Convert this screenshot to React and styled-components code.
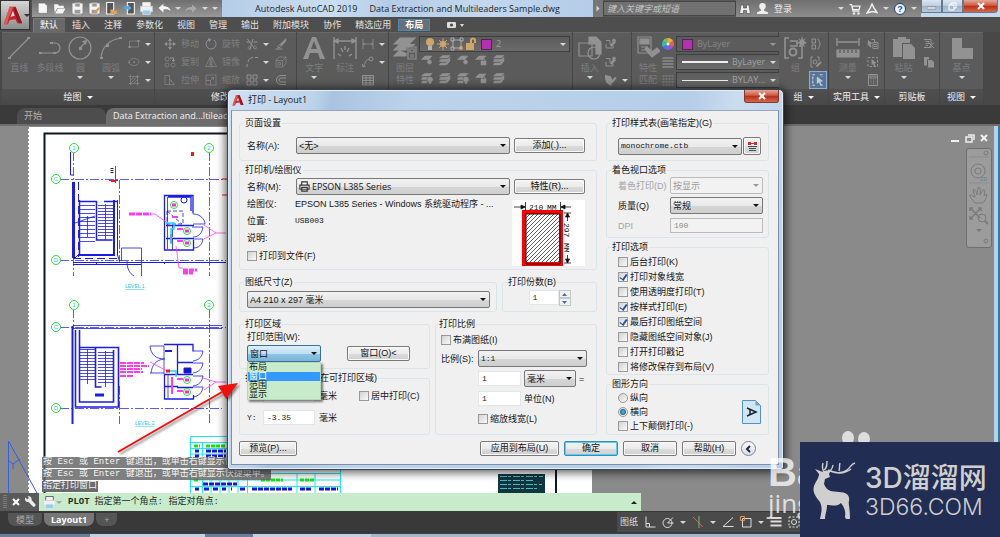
import React, { useState } from 'react'
import styled, { createGlobalStyle, css } from 'styled-components';

const GlobalStyle = createGlobalStyle`
* { box-sizing: border-box; }
html, body { margin: 0; height: 100%; overflow: hidden; }
#root { height: 100%; }
body, button, input, select {
    font-family: "Liberation Sans", "Noto Sans CJK SC", sans-serif;
    font-size: 9px;
    line-height: 12px;
}
button, input, select { margin: 0; padding: 0; border: 0; background: none; color: inherit; }
ul { margin: 0; padding: 0; list-style: none; }
p, dl, dd, h1, h2 { margin: 0; font-size: inherit; font-weight: inherit; }
svg { display: block; flex: none; }
`;

/* ---------- icons ---------- */

const shapes = {
    line: <><path d="M3 21L21 3" /><path d="M1 21h3v2H1zM20 1h3v2h-3z" fill="currentColor" stroke="none" /></>,
    polyline: <><path d="M2 17h15a5 5 0 0 0 0-10h-3" /><path d="M1 16h3v2H1zM12 6h3v2h-3zM15 16h3v2h-3z" fill="currentColor" stroke="none" /></>,
    circle: <><circle cx="12" cy="12" r="11" /><path d="M12 12l6-6" /><path d="M14 5l5-1-1 5zM11 11h3v3h-3z" fill="currentColor" stroke="none" /></>,
    arc: <><path d="M2 22C3 11 10 4 22 2" /><path d="M1 21h3v2H1zM7 8h3v3H7zM20 1h3v2h-3z" fill="currentColor" stroke="none" /></>,
    rect: <><path d="M3 6h18v12H3z" /><path d="M1 16h4v4H1zM19 4h4v4h-4z" fill="currentColor" stroke="none" /></>,
    ellipse: <><ellipse cx="12" cy="12" rx="10" ry="7" /><path d="M11 11h3v3h-3zM1 11h3v3H1z" fill="currentColor" stroke="none" /></>,
    hatch: <><path d="M5 1v22M19 1v22M1 5h22M1 19h22M5 13l8-8M5 19L19 5M11 19l8-8" /></>,
    move: <><path d="M12 3v18M3 12h18" strokeWidth="2" /><path d="M12 0l4 6H8zM12 24l4-6H8zM0 12l6-4v8zM24 12l-6-4v8z" fill="currentColor" stroke="none" /></>,
    rotate: <><path d="M18 4a10 10 0 1 1-10-1" strokeWidth="2" /><path d="M6 0l7 3-5 5z" fill="currentColor" stroke="none" /></>,
    trim: <><path d="M3 2l14 19M14 2L8 22M1 8h8M15 8h8" strokeWidth="2" /><circle cx="7" cy="20" r="3" /><circle cx="18" cy="19" r="3" /></>,
    erase: <><path d="M22 1L10 13l3 3L22 6z" fill="currentColor" /><path d="M10 13l-5 5 3 2 5-4M1 22h14" strokeWidth="2" /></>,
    copy: <><circle cx="6" cy="6" r="4" /><circle cx="6" cy="18" r="4" /><circle cx="18" cy="18" r="4" /><path d="M12 4h7v6M16 8l3 3 3-3" strokeWidth="2" /></>,
    mirror: <><path d="M10 3v18H1zM14 3v18h9z" /><path d="M12 0v24" /></>,
    fillet: <><path d="M2 22v-6M4 12C5 6 9 3 14 3M18 3h6" strokeWidth="2" /></>,
    explode: <><path d="M2 9h13v13H2zM2 9l6-7h14v13l-7 7M15 9l7-7M6 13h5v5H6z" /></>,
    stretch: <><path d="M2 3h9v18H2zM11 10l10 11H11" /><path d="M15 12v4" /></>,
    scale: <><path d="M2 2h20v20H2zM2 13h9v9" /><path d="M11 13l6-6M12 7h5v5" /></>,
    array: <><path d="M2 2h8v8H2zM14 2h8v8h-8zM2 14h8v8H2zM14 14h8v8h-8z" strokeWidth="2" /></>,
    offset: <><path d="M22 3H12a9 9 0 0 0 0 18h10M22 8H12a4 4 0 0 0 0 8h10" strokeWidth="2" /></>,
    text: <path d="M1 23L10 1h4l9 22h-5l-2-6H8l-2 6zM9 13h6l-3-8z" fill="currentColor" stroke="none" />,
    dimension: <><path d="M1 1v22M23 1v22M1 5h22M8 20l-3-2M10 16l-2-4M14 16l2-4M16 20l3-2M12 14v-4" strokeWidth="1.4" /><path d="M1 5l4-2v4zM23 5l-4-2v4z" fill="currentColor" /></>,
    linear: <><path d="M2 2v20M22 2v20M2 12h20M5 10l-3 2 3 2M19 10l3 2-3 2" strokeWidth="1.6" /></>,
    leader: <><circle cx="18" cy="6" r="4" strokeWidth="2" /><path d="M14 7C6 7 7 16 2 22M1 16l1 6 5-2" strokeWidth="2" /></>,
    table: <><path d="M1 3h22v19H1zM1 8h22M1 13h22M1 18h22M8 3v19M16 3v19" strokeWidth="2" /></>,
    layers: <><path d="M7 2h15l-6 6H1zM7 8l-6 6h12v-3h5l4-3M7 14l-6 6h12v-3" fill="currentColor" /><path d="M15 11h8v12h-8z" fill="#5b5b5b" /><path d="M17 13h4v3h-4zM17 19h4M17 21h4" /></>,
    layerOne: <><path d="M8 4h14l-6 7H1z" fill="currentColor" /><circle cx="17" cy="16" r="4" fill="currentColor" /></>,
    layerLock: <><path d="M8 4h14l-6 7H1z" fill="currentColor" /><path d="M12 14h10v8H12z" fill="currentColor" /><path d="M14 14v-2c0-3 6-3 6 0v2" strokeWidth="2" /></>,
    layerTwo: <><path d="M7 3h15l-5 5H1zM3 11h13l6-4v3l-5 5H1zM3 18h10l3-2v3l-2 3H1z" fill="currentColor" /><path d="M15 21l7-9" strokeWidth="3" /></>,
    layerBulb: <><path d="M7 3h15l-5 5H1zM3 11h9l-1 4H1zM3 18h9v4H1z" fill="currentColor" /><circle cx="18" cy="15" r="5" fill="currentColor" /><path d="M16 20h4v3h-4z" fill="currentColor" /></>,
    insert: <><path d="M1 7h13v13H1z" /><circle cx="16" cy="17" r="6" /><path d="M11 1h7l5 5v12h-5V8h-7z" fill="currentColor" /></>,
    block: <><path d="M2 5h8v8M2 12v8h14v-5" strokeWidth="2" /><path d="M10 14l8-8 3 3-8 8z" fill="currentColor" /><circle cx="18" cy="5" r="3" fill="currentColor" /></>,
    tag: <><path d="M1 4l9 2 3 6-2 9-7-5zM12 18l10-11" fill="currentColor" strokeWidth="4" /></>,
    match: <><path d="M2 1h13v16H2z" /><path d="M4 3h9v5H4zM5 11h7M5 14h7" fill="currentColor" /><path d="M11 11l5 5 5-4 3 3-8 6-7-8z" fill="currentColor" /></>,
    lines: <path d="M1 4h22M1 10h22M1 16h22M1 22h22" strokeWidth="3" />,
    dashes: <path d="M1 4h22M1 10h22M1 16h22M1 22h22" strokeWidth="2" strokeDasharray="4 2" />,
    group: <><path d="M6 2H2v20h4M16 10h3v12h-4M7 5h7v5H7" strokeWidth="1.6" /><circle cx="10" cy="16" r="3.5" strokeWidth="2" /><path d="M19 0l1 4 3-2-2 3 3 2-3 1 1 3-3-2-3 2 1-3-3-1 3-2-2-3 3 2z" fill="currentColor" stroke="none" /></>,
    ungroup: <><path d="M4 2h7v8H4zM4 14h7v8H4zM15 2c5 0 2 9 6 10-4 1-1 10-6 10" strokeWidth="2" /></>,
    editGroup: <><path d="M6 2H2v20h4M14 2h4v8" strokeWidth="2" /><circle cx="10" cy="12" r="4" strokeWidth="2" /><path d="M13 21l9-9" strokeWidth="4" /></>,
    pickGroup: <><path d="M7 3H3v18h4M15 3h4v4M17 21h3" strokeWidth="2" strokeDasharray="5 2" /><path d="M10 6l11 8-5 1 3 6-3 1-2-6-4 3z" fill="currentColor" stroke="none" /></>,
    measure: <><path d="M1 2v8M23 2v8M2 6h20" strokeWidth="1.4" /><path d="M1 14h22v7H1z" fill="currentColor" /><path d="M4 14v3M8 14v3M12 14v3M16 14v3M20 14v3" stroke="#555" /></>,
    pick: <><path d="M12 9h10v12H12zM14 13h6M14 17h6M9 3h6v6" strokeWidth="2" /><path d="M2 4l9 7-4 1 2 6-3 1-2-5-3 2z" fill="currentColor" stroke="none" /></>,
    pickAll: <><path d="M2 3h19v18H2z" strokeWidth="2" strokeDasharray="5 3" /><path d="M9 6l10 8-4 1 2 5-3 1-2-5-3 2z" fill="currentColor" stroke="none" /></>,
    calc: <><path d="M3 1h18v22H3zM6 4h12v4H6zM7 12h2M12 12h2M17 12h1M7 16h2M12 16h2M17 16h1M7 20h2M12 20h2M17 20h1" strokeWidth="2" /></>,
    paste: <path d="M1 3h5V1h8v2h4v4h-8v14H1zM11 8h8l4 4v11H11z" fill="currentColor" stroke="none" />,
    cut: <><path d="M2 3h14v16H2M5 7h8M5 11h8M5 15h5" strokeWidth="2" /><path d="M11 9l11 11M22 9L11 20" strokeWidth="2" /></>,
    copyClip: <path d="M2 2h10v5H8v12H2zM10 8h8l4 4v11H10z" fill="currentColor" stroke="none" />,
    base: <path d="M2 2h10v10h11v11H2z" fill="currentColor" stroke="none" />,
    newFile: <path d="M4 2h12l5 5v14H4z" fill="currentColor" stroke="#666" />,
    open: <path d="M2 4h7l2 3h9v4H8L3 20zM9 12h14l-5 9H4z" fill="currentColor" stroke="none" />,
    save: <><path d="M2 2h20v20H2z" fill="currentColor" stroke="#777" /><path d="M7 2h10v7H7zM6 14h12v8H6z" fill="#999" /></>,
    saveAs: <><path d="M2 2h20v20H2z" fill="currentColor" stroke="#777" /><path d="M7 2h10v7H7zM6 14h12v8H6z" fill="#999" /><path d="M12 20l9-9" stroke="#dc9b55" strokeWidth="4" /></>,
    mobile: <><path d="M3 1h13v21H3z" fill="#555" strokeWidth="2" /><path d="M10 14h5l1 2h6v6H10z" fill="#e0a356" stroke="none" /></>,
    mobileSave: <><path d="M8 1h13v21H8z" fill="#555" strokeWidth="2" /><path d="M1 8h8V4l7 7-7 6v-4H1z" fill="#53a6e2" stroke="none" /></>,
    print: <><path d="M5 1h14v8H5z" fill="#f5f5f5" /><path d="M1 8h22v10H1z" fill="#f0f0f0" stroke="#cdd2d6" /><path d="M5 15h14v8H5z" fill="#9acbea" stroke="#d9eefb" /></>,
    undo: <path d="M1 11l9-8v5c9 0 13 4 13 9-3-4-7-4-13-3v6z" fill="currentColor" stroke="none" />,
    redo: <path d="M23 11l-9-8v5C5 8 1 12 1 17c3-4 7-4 13-3v6z" fill="currentColor" stroke="none" />,
    search: <><path d="M4 4h5v6h6V4h5l3 17h-8v-6H9v6H1z" fill="currentColor" stroke="#444" /></>,
    user: <><circle cx="12" cy="8" r="6" fill="currentColor" stroke="none" /><path d="M9 12h6v4l7 3v3H2v-3l7-3z" fill="currentColor" stroke="none" /></>,
    cart: <><path d="M1 3h4l3 13h13M6 6h16l-2 7H8z" strokeWidth="2.5" /><circle cx="10" cy="21" r="2" fill="currentColor" /><circle cx="19" cy="21" r="2" fill="currentColor" /></>,
    a360: <path d="M12 2l4 8 6 9-9-2-11 3 6-9z" strokeWidth="3" />,
    wrench: <path d="M3 3l4 4 3-3-3-3c6-2 9 3 8 7l8 9c1 3-3 6-5 4l-9-9C4 13 0 8 3 3z" fill="currentColor" stroke="none" />,
    ortho: <path d="M4 1v21h19M4 15h7v7" strokeWidth="2" />,
    polar: <><circle cx="11" cy="14" r="9" strokeWidth="2" /><path d="M11 14L22 3M11 14h12" strokeWidth="2" /></>,
    iso: <><path d="M2 2l20 20" stroke="#d65c52" strokeWidth="2" /><path d="M14 0v24" stroke="#6ec06c" strokeWidth="2" /></>,
    osnapAngle: <path d="M22 3L2 21h21" strokeWidth="2" />,
    osnap: <><path d="M5 5h17v17H5z" strokeWidth="2" /><path d="M1 1h8v8H1z" stroke="#e5955a" strokeWidth="2" /></>,
    lineWeight: <path d="M1 4h22M1 11h22M1 19h22" strokeWidth="4" />,
    select: <><path d="M2 2h20v20H2z" strokeDasharray="4 3" strokeWidth="2" /><circle cx="12" cy="12" r="5" strokeWidth="2" /></>,
};

const Icon = ({ name, size = 12, className }) => (
    <svg className={className} width={size} height={size} viewBox="0 0 24 24" fill="none"
        stroke="currentColor" strokeWidth="1.2" aria-hidden="true">
        {shapes[name]}
    </svg>
);

const Caret = styled.i`
display: inline-block;
flex: none;
border: 3px solid transparent;
border-top-color: ${p => p.$color || '#d8d8d8'};
border-bottom-width: 0;
`;

const LogoA = ({ size }) => (
    <svg width={size} height={size} viewBox="0 0 24 24" aria-hidden="true">
        <path d="M8 2h7l8 20h-6l-2-5-7 1-2 5H1z" fill="#c3262e" />
        <path d="M8 2l4 1L7 15l-2 8H1z" fill="#e4585b" />
        <path d="M12 7l2 6-5 1z" fill="#f3dfdf" />
        <path d="M15 2l8 20h-4L12 5z" fill="#96181f" />
    </svg>
);

/* ---------- application header ---------- */

const Window = styled.div`
position: relative;
display: flex;
flex-direction: column;
height: 100vh;
min-height: 537px;
overflow: hidden;
background: #3b3b3b;
color: #e4e4e4;
`;

const Header = styled.header`
display: grid;
grid-template-columns: 30px 1fr;
grid-template-rows: 17px 15px;
column-gap: 2px;
background: #4e4e4e;
`;

const AppButton = styled.button`
grid-row: 1 / 3;
display: flex;
align-items: center;
gap: 1px;
height: 30px;
padding-left: 2px;
border: 1px solid #333;
background: linear-gradient(#d6d6d6, #8d8d8d);
`;

const TitleBar = styled.div`
display: flex;
min-width: 0;
`;

const QuickAccess = styled.div`
display: flex;
align-items: center;
justify-content: space-between;
width: 190px;
padding: 0 4px;
background: linear-gradient(#6f6f6f, #989898);
color: #f5f5f5;
button { color: inherit; }
button:disabled { color: #a9a9a9; }
`;

const Title = styled.h1`
flex: 1;
display: flex;
align-items: center;
justify-content: center;
gap: 12px;
min-width: 0;
background: linear-gradient(100deg, #b5cde7, #cadef1 30%, #b4cce6 45%, #c3d8ee 70%, #b3cce8);
color: #20242a;
font-family: "Open Sans", sans-serif;
font-size: 9px;
white-space: nowrap;
`;

const SearchBox = styled.div`
display: flex;
align-items: center;
width: 143px;
background: #5a5a5a;
button { width: 10px; height: 17px; background: #777; display: grid; place-items: center; }
i { transform: rotate(-90deg); }
input {
    flex: 1;
    min-width: 0;
    height: 15px;
    padding: 0 3px;
    border: 1px solid #454545;
    background: #717171;
}
input::placeholder { color: #c4c4c4; font-style: italic; opacity: 1; }
`;

const Account = styled.div`
display: flex;
align-items: center;
gap: 5px;
width: 185px;
padding: 0 4px 0 3px;
background: linear-gradient(#6f6f6f, #8d8d8d);
color: #eee;
.name { margin-right: auto; }
`;

const HelpButton = styled.button`
width: 12px;
height: 12px;
border-radius: 50%;
border: 1px solid #223e70;
background: #eef3fa;
color: #1c4e9c;
font-weight: bold;
line-height: 10px;
`;

const WindowButtons = styled.div`
display: flex;
justify-content: flex-end;
width: 79px;
padding-right: 2px;
background: #c4d8ed;
`;

const WinButton = styled.button`
display: grid;
place-items: center;
width: ${p => p.$close ? 35 : 21}px;
height: 13px;
border: 1px solid #66788c;
border-top: 0;
border-radius: ${p => p.$close ? '0 0 4px 0' : '0'};
background: ${p => p.$close
        ? 'linear-gradient(#e2a79a, #cf5a43 45%, #b92d16 50%, #d2694c)'
        : 'linear-gradient(#dbe6f1, #c1d1e2 45%, #9fb4cb 50%, #b6cade)'};
color: #fff;
`;

const MenuTabs = styled.nav`
display: flex;
align-items: stretch;
padding: 1px 1px 0;
`;

const MenuTab = styled.button`
padding: 0 7px;
line-height: 14px;
color: #e2e2e2;
${p => p.$active && css`
    background: #696969;
    color: #fff;
    box-shadow: inset 1px 1px 0 #7c7c7c;
`}
${p => p.$context && css`
    height: 12px;
    line-height: 10px;
    padding: 0 6px;
    margin-top: 1px;
    border: 1px solid #4f87a8;
    background: #62717b;
    color: #fff;
    font-weight: bold;
`}
`;

/* ---------- ribbon ---------- */

const Ribbon = styled.div`
display: flex;
padding: 0 0 0 2px;
height: 73px;
background: #484848;
`;

const Panel = styled.section`
display: flex;
flex-direction: column;
flex: none;
width: ${p => p.$width}px;
border-right: 1px solid #474747;
background: #5b5b5b;
color: #8c8c8c;
`;

const PanelBody = styled.div`
flex: 1;
display: flex;
justify-content: space-around;
padding: 4px 2px 0;
box-shadow: inset 0 1px 0 #686868;
`;

const PanelTitle = styled.h2`
display: flex;
align-items: center;
justify-content: center;
gap: 5px;
height: 16px;
background: linear-gradient(#505050, #484848);
color: #f0f0f0;
`;

const BigTool = styled.button`
display: flex;
flex-direction: column;
align-items: center;
flex: none;
min-width: 28px;
color: #929292;
span { width: min-content; min-width: 18px; margin-top: 2px; color: #7d7d7d; line-height: 12px; word-break: keep-all; white-space: pre; }
i { margin-top: 2px; }
`;

const ToolGrid = styled.div`
display: grid;
grid-template-columns: repeat(${p => p.$cols || 1}, auto);
grid-auto-rows: 18px;
column-gap: 6px;
align-items: center;
align-content: start;
justify-content: start;
margin-top: -1px;
padding-left: ${p => p.$inset || 0}px;
`;

const SmallTool = styled.button`
display: flex;
align-items: center;
gap: 5px;
color: #929292;
span { color: #7f7f7f; }
${p => p.$on && css`
    padding: 1px;
    outline: 1px solid #8bb0d8;
    background: #5a7494;
    color: #b9cbe0;
`}
`;

const RibbonCombo = styled.label`
display: flex;
align-items: center;
gap: 4px;
height: 16px;
padding: 0 3px 0 5px;
border: 1px solid #3f3f3f;
background: ${p => p.$flat ? '#5c5c5c' : 'linear-gradient(#5c5c5c, #6b6b6b)'};
color: ${p => p.$flat ? '#858585' : '#a0a0a0'};
select { flex: 1; min-width: 0; appearance: none; color: inherit; opacity: 1; font-size: 9px; font-family: "Open Sans", sans-serif; }
`;

const Swatch = styled.span`
width: 11px;
height: 11px;
border: 1px solid #4a2a4a;
background: #b52fb0;
`;

const LineSample = styled.span`
width: 46px;
height: ${p => p.$thin ? 1 : 2}px;
background: #eee;
`;

const LayerArea = styled.div`
display: flex;
flex-direction: column;
width: 152px;
`;

const PropertyGrid = styled.div`
display: grid;
grid-template-columns: 12px 1fr;
grid-auto-rows: 16px;
gap: 2px;
align-items: center;
width: 114px;
`;

const tool = (icon, caret, label) => (
    <SmallTool key={icon + label} type="button" aria-label={label || icon}>
        <Icon name={icon} />{label && <span>{label}</span>}{caret && <Caret />}
    </SmallTool>
);

const Big = ({ icon, label, caret, size = 24 }) => (
    <BigTool type="button"><Icon name={icon} size={size} /><span>{label}</span>{caret && <Caret />}</BigTool>
);

const RibbonPanel = ({ width, title, caret, children }) => (
    <Panel $width={width}>
        <PanelBody>{children}</PanelBody>
        <PanelTitle>{title}{caret && <Caret $color="#fff" />}</PanelTitle>
    </Panel>
);

const ColorWheel = () => (
    <svg width="12" height="12" viewBox="-12 -12 24 24" aria-hidden="true">
        {['#f0a63a', '#e9604b', '#9c55e0', '#4976f0', '#37b9b2', '#64c957'].map((c, i) => (
            <path key={c} d="M0 0L0-12A12 12 0 0 1 10.4-6z" fill={c} transform={`rotate(${i * 60})`} />
        ))}
        <circle r="3" fill="#eee" />
    </svg>
);

const LayerStateIcons = () => (
    <svg width="52" height="14" viewBox="0 0 52 14" aria-hidden="true" fill="#cfa66a">
        <circle cx="5" cy="5" r="4" /><path d="M3 9h4v4H3z" fill="#b5b5b5" />
        <circle cx="18" cy="7" r="3" /><path d="M18 1v12M12 7h12M14 3l8 8M22 3l-8 8" stroke="#cfa66a" />
        <path d="M28 3h8v8h-8zM26 1h3v3h-3zM35 1h3v3h-3zM26 10h3v3h-3z" fill="none" stroke="#aaa" /><circle cx="36" cy="11" r="2" />
        <path d="M41 6h8v7h-8z" /><path d="M46 6V3c0-2 4-2 4 0v3" fill="none" stroke="#cfa66a" strokeWidth="2" />
    </svg>
);

const layerTools = [
    ['layerOne', 'layerTwo', 'layerOne', 'layerLock', 'layerTwo'],
    ['layerBulb', 'layerTwo', 'layerBulb', 'layerLock', 'layerTwo'],
];

const AppHeader = () => (
    <Header>
        <AppButton type="button" aria-label="A"><LogoA size={20} /><Caret $color="#333" /></AppButton>
        <TitleBar>
            <QuickAccess>
                {['newFile', 'open', 'save', 'saveAs', 'mobile', 'mobileSave', 'print', 'undo'].map(n => (
                    <button type="button" key={n} aria-label={n}><Icon name={n} size={13} /></button>
                ))}
                <Caret /><button type="button" aria-label="redo" disabled><Icon name="redo" /></button><Caret /><Caret />
            </QuickAccess>
            <Title><span>Autodesk AutoCAD 2019</span><span>Data Extraction and Multileaders Sample.dwg</span></Title>
            <SearchBox>
                <button type="button" aria-label="展开"><Caret /></button>
                <input aria-label="搜索" placeholder="键入关键字或短语" />
            </SearchBox>
            <Account>
                <Icon name="search" /><Icon name="user" size={13} /><span className="name">登录</span>
                <Caret /><Icon name="cart" /><Icon name="a360" /><Caret />
                <HelpButton type="button">?</HelpButton><Caret />
            </Account>
            <WindowButtons>
                <WinButton aria-label="最小化"><svg width="9" height="8"><path d="M0 5h9v2H0z" fill="#fff" stroke="#556" strokeWidth=".5" /></svg></WinButton>
                <WinButton aria-label="还原"><svg width="9" height="9" fill="none" stroke="#fff"><path d="M3 3V1h5v5H6M1 3h5v5H1z" /></svg></WinButton>
                <WinButton $close aria-label="关闭"><svg width="8" height="8"><path d="M1 1l6 6M7 1L1 7" stroke="#fff" strokeWidth="2" /></svg></WinButton>
            </WindowButtons>
        </TitleBar>
        <MenuTabs>
            {['默认', '插入', '注释', '参数化', '视图', '管理', '输出', '附加模块', '协作', '精选应用'].map((t, i) => (
                <MenuTab type="button" key={t} $active={i === 0}>{t}</MenuTab>
            ))}
            <MenuTab type="button" $context>布局</MenuTab>
            <MenuTab type="button" aria-label="最小化功能区">
                <svg width="34" height="12"><rect x="10" y="3" width="9" height="6" rx="1" fill="#ddd" /><circle cx="14.500" cy="6" r="1.500" fill="#444" /><path d="M23 5h4l-2 3z" fill="#ddd" /></svg>
            </MenuTab>
        </MenuTabs>
    </Header>
);

const AppRibbon = () => (
    <Ribbon>
        <RibbonPanel width={153} title="绘图" caret>
            <Big icon="line" label="直线" /><Big icon="polyline" label="多段线" />
            <Big icon="circle" label="圆" caret /><Big icon="arc" label="圆弧" caret />
            <ToolGrid>{tool('rect', true)}{tool('ellipse', true)}{tool('hatch', true)}</ToolGrid>
        </RibbonPanel>
        <RibbonPanel width={142} title="修改" caret>
            <ToolGrid $cols={4}>
                {tool('move', false, '移动')}{tool('rotate', false, '旋转')}{tool('trim', true)}{tool('erase')}
                {tool('copy', false, '复制')}{tool('mirror', false, '镜像')}{tool('fillet', true)}{tool('explode')}
                {tool('stretch', false, '拉伸')}{tool('scale', false, '缩放')}{tool('array', true)}{tool('offset')}
            </ToolGrid>
        </RibbonPanel>
        <RibbonPanel width={92} title="注释" caret>
            <Big icon="text" label="文字" caret /><Big icon="dimension" label="标注" />
            <ToolGrid>{tool('linear', true)}{tool('leader', true)}{tool('table')}</ToolGrid>
        </RibbonPanel>
        <RibbonPanel width={184} title="图层" caret>
            <Big icon="layers" label={'图层\n特性'} />
            <LayerArea>
                <RibbonCombo>
                    <LayerStateIcons /><Swatch />
                    <select aria-label="图层"><option>2</option></select><Caret />
                </RibbonCombo>
                <ToolGrid $cols={5} $inset={2}>
                    {layerTools.flat().map((n, i) => (
                        <SmallTool key={i} type="button" aria-label={`图层 ${i}`}><Icon name={n} /></SmallTool>
                    ))}
                </ToolGrid>
            </LayerArea>
        </RibbonPanel>
        <RibbonPanel width={59} title="块" caret>
            <Big icon="insert" label="插入" caret />
            <ToolGrid>{tool('block')}{tool('block', false, '')}{tool('tag', true)}</ToolGrid>
        </RibbonPanel>
        <RibbonPanel width={147} title="特性" caret>
            <Big icon="match" label={'特性\n匹配'} />
            <PropertyGrid>
                <ColorWheel />
                <RibbonCombo $flat><Swatch /><select aria-label="颜色" disabled><option>ByLayer</option></select><Caret $color="#999" /></RibbonCombo>
                <Icon name="lines" />
                <RibbonCombo><LineSample /><select aria-label="线宽"><option>ByLayer</option></select><Caret /></RibbonCombo>
                <Icon name="dashes" />
                <RibbonCombo><LineSample $thin /><select aria-label="线型"><option>BYLAY...</option></select><Caret /></RibbonCombo>
            </PropertyGrid>
        </RibbonPanel>
        <RibbonPanel width={50} title="组" caret>
            <Big icon="group" label="组" />
            <ToolGrid>
                {tool('ungroup')}{tool('editGroup')}
                <SmallTool type="button" $on aria-label="组选择"><Icon name="pickGroup" size={14} /></SmallTool>
            </ToolGrid>
        </RibbonPanel>
        <RibbonPanel width={56} title="实用工具" caret>
            <Big icon="measure" label="测量" caret />
            <ToolGrid>{tool('pick')}{tool('pickAll')}{tool('calc')}</ToolGrid>
        </RibbonPanel>
        <RibbonPanel width={55} title="剪贴板">
            <Big icon="paste" label="粘贴" caret />
            <ToolGrid>{tool('cut')}{tool('copyClip')}</ToolGrid>
        </RibbonPanel>
        <RibbonPanel width={44} caret title="视图">
            <Big icon="base" label="基点" caret />
        </RibbonPanel>
    </Ribbon>
);

/* ---------- drawing area ---------- */

const DocTabs = styled.div`
display: flex;
align-items: flex-end;
height: 21px;
padding-left: 17px;
border-bottom: 2px solid #6d6d6d;
background: #3a3a3a;
`;

const DocTab = styled.button`
height: 16px;
width: ${p => p.$width}px;
padding: 0 7px;
text-align: left;
white-space: nowrap;
border-radius: 8px 8px 0 0;
background: ${p => p.$active ? '#6d6d6d' : '#4d4d4d'};
color: ${p => p.$active ? '#f2f2f2' : '#b0b0b0'};
font-family: "Open Sans", "Noto Sans CJK SC", sans-serif;
`;

const Canvas = styled.main`
position: relative;
flex: 1;
display: flex;
justify-content: space-between;
min-height: 0;
overflow: hidden;
background: #8a8a8a;
border-right: 2px solid #2f7f9c;
box-shadow: inset -4px 0 0 #b5d2ec;
`;

const History = styled.ul`
position: absolute;
left: 42px;
bottom: 1px;
font-family: "Liberation Mono", "Noto Sans CJK SC", monospace;
color: #f4f4f4;
li {
    width: max-content;
    margin-top: 1px;
    padding: 0 1px;
    line-height: 11px;
    background: rgba(105, 105, 105, .85);
}
li:last-child { background: #6b6b6b; }
`;

const ViewTools = styled.aside`
display: flex;
flex-direction: column;
align-items: flex-end;
gap: 4px;
margin: 6px 6px 0 0;
`;

const NavBar = styled.div`
display: flex;
flex-direction: column;
align-items: center;
width: 26px;
border: 1px solid #6f6f6f;
border-radius: 3px;
background: #9c9c9c;
`;

const Drawing = () => {
    const bubbles = [
        [74, 148, '1'], [209, 148, '2'], [56, 179, 'C'], [56, 260, 'D'],
        [74, 305, '1'], [209, 305, '2'], [56, 327, 'C'], [56, 408, 'D'],
    ];
    const treads = [0, 1, 2, 3, 4, 5, 6, 7, 8, 9, 10];
    return (
        <svg width="600" height="367" viewBox="0 126 600 367" fill="none" aria-hidden="true">
            <path d="M28 127h564v366H28z" fill="#fff" />
            <path d="M28.500 127v366" stroke="#888" strokeDasharray="2 2" />
            <path d="M44.500 493V133.500H556V493" stroke="#111820" strokeWidth="2" />
            <g stroke="#5a5aff" strokeDasharray="9 2 2 2">
                <path d="M60 179.500h166M60 260.500h166M60 327.500h166M60 408.500h162M73.500 152v124M209.500 152v124M119.500 180v82M209.500 309v116M73.500 309v20M119.500 386v38" />
            </g>
            {/* level 1 */}
            <g stroke="#1c1ce8">
                <path d="M70.500 152v23h3M73 262.500h153M73 264.500h68M96.500 262v2M164.500 262v2" />
                <path d="M73.500 182v76" strokeWidth="3" /><path d="M78.500 182v75M73 258.500h44" strokeDasharray="8 4" />
                <path d="M79.500 200v55M79 201.500h18M104 201.500h14M96.500 201v39h16" strokeWidth="1.500" />
                <path d="M79 255h35v-55" strokeWidth="2" />
                <path d="M117.500 200v55l2 6M79 254l-5 5" />
                {treads.map(i => <path key={i} d={`M79 ${201.5 + i * 4}h16M98 ${205.5 + i * 3}h15`} strokeWidth=".8" />)}
                <path d="M75 223l20-7M87.500 216v21M105.500 204v36" strokeWidth=".8" />
                <path d="M121.500 261v-13h20v13M127 261c0 7 2 12 7 15M141.500 261v15" strokeWidth=".8" />
                <path d="M164.500 195v55h29v-10M164 195.500h29v18M168 197h23v14M166 225.500h28M166 238.500h28" strokeWidth="1.300" />
                <path d="M167.500 197v52M172.500 225v12M172.500 238v12M193 214c8 0 12 6 12 10h-12M192 227h11c-1 6-4 10-10 10M193 239h10c-1 6-4 9-10 9" strokeWidth=".8" />
                <circle cx="184" cy="200" r="3" /><path d="M167 211h16v13h-16zl15 13" strokeDasharray="4 2" strokeWidth=".8" />
            </g>
            {/* level 2 */}
            <g stroke="#1c1ce8">
                <path d="M73 325.500h149M73 328.500h149" strokeWidth=".8" /><path d="M72.500 326v98" strokeWidth="2" />
                <path d="M75.500 330v77h43v-59.500H79M95.500 347v40h6" strokeWidth="1.600" />
                <path d="M79.500 330v72h34v-52" strokeWidth="1.600" />
                {treads.map(i => <path key={i} d={`M79 ${349.5 + i * 3}h16M98 ${352.5 + i * 3}h15`} strokeWidth=".8" />)}
                <path d="M87.500 349v35M105.500 351v36" strokeWidth=".8" /><path d="M95 395h9" strokeWidth="3" />
                <path d="M164 344.500h29v7M177.500 344v30M164.500 374v25h29v-4M177 362.500h16M164 386.500h14M164 374.500h29M177 387.500h16" strokeWidth="1.300" />
                <path d="M150 346h14v28M150 346c1 9 6 13 15 13M150 373h14M151 373c1-8 5-13 13-14M193 351h10c-1 6-4 9-10 10M193 363h10c-1 6-4 9-10 10M193 376h10c-1 6-4 9-10 10M193 387h10c-1 6-4 9-10 10M168 375v23" strokeWidth=".8" />
                <path d="M165 351h7" strokeWidth="2" /><path d="M184 368h7v5h-7z" fill="#1414c0" />
            </g>
            <g stroke="#ff3cf2">
                <path d="M129 214h22" strokeWidth="3" strokeDasharray="6 1" /><path d="M151 214h4l14 10M176 246l3 22h4M204 225l12 8-12 6M216 233h10" strokeWidth=".8" />
                <path d="M183 270h14M183 273h10" strokeWidth="3" strokeDasharray="5 1" /><path d="M172 217h6M171 234v9M177 229h6M177 241h6" strokeWidth="2" />
                <path d="M120 363h24M120 366h29M120 369h22M120 372h23M120 376h14" strokeWidth="2" strokeDasharray="6 1" />
                <path d="M150 362l17 9M203 378l13 4-12 8M216 382h10" strokeWidth=".8" /><path d="M172 377v17M177 379h6M177 391h6" strokeWidth="2" />
            </g>
            <g stroke="#2fd83c">
                <circle cx="174" cy="205" r="3.500" /><circle cx="187" cy="231" r="3.500" /><circle cx="187" cy="243" r="3.500" />
                <circle cx="187" cy="380" r="3.500" /><circle cx="187" cy="392" r="3.500" />
                {bubbles.map(([x, y]) => <circle key={`${x}${y}`} cx={x} cy={y} r="4.500" fill="#fff" />)}
            </g>
            <g stroke="#e639c4" strokeWidth="3"><path d="M172 205h4M185 231h4M185 243h4M185 380h4M185 392h4" /></g>
            <path d="M166 223h8v6h-3v15M168 371h8v6" stroke="#20d8f0" strokeWidth="1.500" />
            <g stroke="#f01818">
                <path d="M115.500 166v17M109 180.500h9" strokeWidth="1" /><path d="M111 181h5" strokeWidth="2" /><path d="M192.500 152v4M166 371h4" strokeWidth="3" /><path d="M222 179h5M222 195h5" />
            </g>
            <path d="M112 168v5" stroke="#222" strokeWidth="3" strokeDasharray="1 1" />
            <g fill="#18c8e8" fontSize="6" fontFamily="Liberation Sans, sans-serif">
                {bubbles.map(([x, y, t]) => <text key={`${x}${y}`} x={x} y={y + 2} textAnchor="middle">{t}</text>)}
                <text x="125" y="288" textDecoration="underline" fontSize="5">LEVEL 1</text>
                <text x="135" y="425" textDecoration="underline" fontSize="5">LEVEL 2</text>
            </g>
            {/* fixture schedule */}
            <g stroke="#1ee8f2">
                <path d="M190.500 493v-56.500h150V493M190 442.500h150M190 448.500h150M190 454h150M190 459.500h150M190 473.500h150M190 480h150M190 486.500h150M202.500 442v51M211 480v13M220 480v13M229 480v13M238 473v20M247.500 473v20M297 473v20M315 473v20" />
            </g>
            <g strokeWidth="3">
                <path d="M194 446h6M206 446h19M194 480h4M261 480h22M300 480h14" stroke="#12e412" strokeDasharray="4 1" />
                <path d="M195 451h4M206 451h20M195 456h4M206 456h20M203 484h34M195 489h4M204 489h5M213 489h5M222 489h4M231 489h1M240 489h5M252 489h40M300 489h12M319 489h19" stroke="#1616d8" strokeDasharray="5 1" />
            </g>
            <path d="M498 474h47v19h-47z" fill="#123640" />
            <g stroke="#4fb9bd" strokeDasharray="7 1 3 2"><path d="M500 476.500h43M500 480.500h34M500 484.500h42M500 488.500h38" /></g>
            <path d="M8.500 493v-52L37 493M8 460l5 4 7-5M13 464v5" stroke="#3560d8" />
        </svg>
    );
};

/* ---------- bottom of the window ---------- */

const CommandLine = styled.label`
display: flex;
align-items: center;
width: 641px;
max-width: 100%;
height: 18px;
background: #c8ebcb;
color: #1e2a20;
font-family: "Liberation Mono", "Noto Sans CJK SC", monospace;
b { margin: 0 5px 0 6px; }
`;

const Prompt = styled.span`
flex: 1;
`;

const ExpandCaret = styled(Caret)`
margin-right: 4px;
transform: rotate(180deg);
`;

const CommandTools = styled.span`
display: flex;
align-items: center;
justify-content: space-between;
width: 39px;
height: 18px;
margin-right: 4px;
padding: 0 3px;
background: #5a5a5a;
color: #eee;
`;

const CommandStrip = styled.div`
background: #8a8a8a;
`;

const BottomBar = styled.footer`
display: flex;
justify-content: space-between;
height: 22px;
background: #393939;
`;

const LayoutTabs = styled.div`
display: flex;
align-items: flex-start;
gap: 2px;
padding: 2px 0 0 8px;
`;

const LayoutTab = styled.button`
height: 13px;
padding: 0 ${p => p.$active ? 7 : 8}px;
border-radius: 0 0 7px 7px;
background: ${p => p.$active ? '#777' : '#555'};
color: ${p => p.$active ? '#fff' : '#aaa'};
font-family: "Open Sans", "Noto Sans CJK SC", sans-serif;
font-weight: ${p => p.$active ? 'bold' : 'normal'};
`;

const StatusBar = styled.div`
display: flex;
align-items: center;
gap: 6px;
width: 383px;
height: 20px;
margin-top: 1px;
padding-left: 3px;
background: #4a4a4a;
color: #dcdcdc;
`;

const Taskbar = styled.div`
display: grid;
grid-template-columns: 90px 115px 48px 118px 1fr;
height: 4px;
border-top: 1px solid #2a4257;
background: #6b7f9b;
span:nth-child(even) { background: #c5cfdd; }
span:last-child { background: #a9b6c8; }
`;

/* ---------- plot dialog ---------- */

const Dialog = styled.div`
position: absolute;
left: 227px;
top: 89px;
width: 557px;
padding: 0 4px 4px 3px;
border: 1px solid #39424d;
border-radius: 5px 5px 3px 3px;
background: linear-gradient(100deg, #cfe0f1, #bdd3eb 14%, #a9c4e0 17%, #bdd3eb 30%, #b6cee8 75%, #cbdcef 82%, #b4cce6);
box-shadow: 0 1px 8px 2px rgba(0, 0, 0, .6), inset 0 0 0 1px #e4eef8;
color: #151515;
`;

const DialogTitle = styled.div`
display: flex;
align-items: center;
gap: 4px;
height: 20px;
padding-left: 1px;
font-family: "Open Sans", "Noto Sans CJK SC", sans-serif;
h2 { flex: 1; }
`;

const DialogClose = styled(WinButton)`
align-self: flex-start;
border-color: #7b3a34;
border-radius: 0 0 3px 3px;
`;

const DialogBody = styled.form`
padding: 5px 9px 8px 7px;
border: 1px solid #7c91a8;
border-top-color: #97a8ba;
background: #f0f0f0;
`;

const Columns = styled.div`
display: grid;
grid-template-columns: 1fr 163px;
gap: 9px;
`;

const Column = styled.div`
display: flex;
flex-direction: column;
gap: 2px;
min-width: 0;
`;

const Split = styled.div`
display: grid;
grid-template-columns: ${p => p.$cols};
gap: 5px;
margin-top: ${p => p.$top || 0}px;
`;

const Group = styled.fieldset`
min-width: 0;
margin: 0;
padding: ${p => p.$pad || '0 7px'};
border: 1px solid #dae5ea;
border-radius: 3px;
flex: ${p => p.$grow ? 1 : 'none'};
legend { margin-left: ${p => p.$wide ? -7 : -3}px; padding: 0 1px; line-height: 14px; white-space: nowrap; }
`;

const FieldRow = styled.div`
display: grid;
grid-template-columns: ${p => p.$cols};
column-gap: ${p => p.$gap || 4}px;
align-items: center;
min-height: 17px;
white-space: nowrap;
`;

const Stack = styled.div`
display: grid;
row-gap: ${p => p.$gap || 0}px;
`;

const SelectBox = styled.span`
display: grid;
align-items: center;
min-width: 0;
height: 17px;
border: 1px solid #777;
border-radius: 2px;
background: linear-gradient(#f2f2f2, #e8e8e8 50%, #d6d6d6 51%, #cfcfcf);
> * { grid-area: 1 / 1; }
svg { margin-left: 2px; }
select {
    appearance: none;
    width: 100%;
    padding: 0 12px 0 ${p => p.$icon ? 15 : 2}px;
    outline: none;
    opacity: 1;
    font-size: ${p => p.$mono ? 8 : 9}px;
    ${p => p.$mono && 'font-family: "Liberation Mono", monospace;'}
    ${p => p.$icon && 'font-family: "Open Sans", sans-serif;'}
}
i { justify-self: end; margin-right: 3px; }
${p => p.$disabled && css`
    border-color: #bbb;
    background: #f2f2f2;
    color: #9a9a9a;
`}
${p => p.$open && css`
    border-color: #3c6f94;
    background: linear-gradient(#dcf0fa, #bfe0f3 50%, #90c6e6 51%, #79b4d8);
`}
`;

const Anchor = styled.div`
position: relative;
display: grid;
`;

const OptionList = styled.ul`
position: absolute;
z-index: 2;
top: 17px;
left: 0;
width: 74px;
border: 1px solid #b9d6bd;
background: #c8ebcb;
box-shadow: 2px 2px 2px rgba(0, 0, 0, .5);
li { padding-left: 1px; line-height: 9px; cursor: default; }
li[aria-selected="true"] { background: #3399ff; color: #fff; }
`;

const TextBox = styled.input`
width: 100%;
height: 15px;
padding: 0 3px;
border: 1px solid ${p => p.disabled ? '#bbb' : '#e2e5ea'};
background: ${p => p.disabled ? '#f2f2f2' : '#fff'};
color: ${p => p.disabled ? '#8a8a8a' : '#222'};
font-family: "Liberation Mono", monospace;
font-size: 8px;
`;

const PushButton = styled.button`
height: 15px;
padding: 0 4px;
border: 1px solid ${p => p.$primary ? '#2f8fbf' : '#7a7a7a'};
border-radius: 2px;
background: linear-gradient(#f4f4f4, #ebebeb 50%, #dcdcdc 51%, #d0d0d0);
box-shadow: inset 0 0 0 1px ${p => p.$primary ? '#5ccdf0' : '#fafafa'};
color: #111;
line-height: 13px;
white-space: nowrap;
width: ${p => p.$width ? `${p.$width}px` : 'auto'};
`;

const IconButton = styled(PushButton)`
display: grid;
place-items: center;
height: 18px;
padding: 0;
`;

const Check = styled.label`
display: flex;
align-items: center;
gap: 2px;
height: ${p => p.$height || 15}px;
white-space: nowrap;
input {
    appearance: none;
    display: grid;
    place-items: center;
    flex: none;
    width: 10px;
    height: 10px;
    border: 1px solid #999;
    background: linear-gradient(135deg, #d2d2d2, #fafafa);
}
input[type="radio"] { border-radius: 50%; }
input[type="checkbox"]:checked::before {
    content: "";
    width: 3px;
    height: 6px;
    margin-top: -1px;
    border: solid #2b4fa0;
    border-width: 0 2px 1px 0;
    transform: rotate(35deg);
}
input[type="radio"]:checked::before {
    content: "";
    width: 6px;
    height: 6px;
    border-radius: 50%;
    background: radial-gradient(#4fc0ea, #123d5c);
}
`;

const Info = styled.dl`
display: grid;
grid-template-columns: 44px 1fr;
grid-auto-rows: 17px;
column-gap: 4px;
align-items: center;
white-space: nowrap;
`;

const Mono = styled.span`
font-family: "Liberation Mono", "Noto Sans CJK SC", monospace;
font-size: 8px;
`;

const Muted = styled.span`
color: #a5a5a5;
`;

const PrinterRow = styled.div`
display: grid;
grid-template-columns: 1fr 73px;
> div { min-width: 0; }
> svg { margin-top: 5px; }
`;

const Spinner = styled.div`
display: grid;
grid-template-columns: 30px 12px;
justify-content: center;
margin-top: 1px;
button { width: 12px; height: 8px; border: 1px solid #c2c8d0; display: grid; place-items: center; }
`;

const DialogButtons = styled.div`
display: flex;
align-items: center;
gap: 5px;
margin-top: 6px;
> :first-child { margin-right: auto; }
`;

const CollapseButton = styled.button`
display: grid;
place-items: center;
width: 15px;
height: 15px;
margin: 0 13px 0 0;
border: 1px solid #7c8594;
border-radius: 50%;
background: linear-gradient(#fff, #d6dce6);
`;

const PaperPreview = () => (
    <svg width="73" height="66" viewBox="0 0 73 66" aria-hidden="true">
        <defs>
            <pattern id="diag" width="4" height="4" patternUnits="userSpaceOnUse">
                <path d="M-1 5L5-1" stroke="#333" strokeWidth=".8" />
            </pattern>
        </defs>
        <path d="M0 0h73v66H0z" fill="#fff" />
        <path d="M12 12h37v52H12z" fill="url(#diag)" stroke="#f00" strokeWidth="4" />
        <path d="M14 14h34v50H14z" fill="none" stroke="#111" />
        <path d="M13.500 2v9M48.500 2v9M2 7h11M49 7h10M52 13h7M52 63h7M55.500 14v7M55.500 55v8M13 7l-4-2v4zM49 7l4-2v4zM55.500 13l-2 4h4zM55.500 63l-2-4h4z" stroke="#111" fill="#111" strokeWidth=".8" />
        <g fontFamily="Liberation Mono, monospace" fontSize="8" fill="#111">
            <text x="17" y="10">210</text><text x="35" y="10">MM</text>
            <text transform="translate(52 23) rotate(90)">297</text><text transform="translate(52 43) rotate(90)">MM</text>
        </g>
    </svg>
);

const Select = ({ value, label, ...rest }) => (
    <SelectBox {...rest}>
        {rest.$icon && (
            <svg width="11" height="11" viewBox="0 0 24 24" fill="#f5fff5" stroke="#333" strokeWidth="2.500">
                <path d="M6 9V2h12v7M2 9h20v9H2zM6 14h12v8H6z" />
            </svg>
        )}
        <select disabled={rest.$disabled} aria-label={label || value}><option>{value}</option></select>
        <Caret $color={rest.$disabled ? '#999' : '#111'} />
    </SelectBox>
);

const plotOptions = [
    ['后台打印(K)', false], ['打印对象线宽', true], ['使用透明度打印(T)', false], ['按样式打印(E)', true],
    ['最后打印图纸空间', true], ['隐藏图纸空间对象(J)', false], ['打开打印戳记', false], ['将修改保存到布局(V)', false],
];

const PlotDialog = () => {
    const [range, setRange] = useState('窗口');

    return (
        <Dialog role="dialog" aria-label="打印 - Layout1">
            <DialogTitle>
                <LogoA size={12} />
                <h2>打印 - Layout1</h2>
                <DialogClose type="button" $close aria-label="关闭">
                    <svg width="8" height="8"><path d="M1 1l6 6M7 1L1 7" stroke="#fff" strokeWidth="2" /></svg>
                </DialogClose>
            </DialogTitle>
            <DialogBody onSubmit={(e) => e.preventDefault()}>
                <Columns>
                    <Column>
                        <Group $pad="7px 11px 6px 7px">
                            <legend>页面设置</legend>
                            <FieldRow $cols="45px 1fr 71px">
                                <span>名称(A):</span><Select value="<无>" /><PushButton type="button">添加(.)...</PushButton>
                            </FieldRow>
                        </Group>
                        <Group $pad="1px 11px 3px 7px">
                            <legend>打印机/绘图仪</legend>
                            <FieldRow $cols="45px 1fr 71px">
                                <span>名称(M):</span><Select $icon value="EPSON L385 Series" /><PushButton type="button">特性(R)...</PushButton>
                            </FieldRow>
                            <PrinterRow>
                                <div>
                                    <Info>
                                        <dt>绘图仪:</dt><dd>EPSON L385 Series - Windows 系统驱动程序 - ...</dd>
                                        <dt>位置:</dt><dd><Mono>USB003</Mono></dd>
                                        <dt>说明:</dt><dd />
                                    </Info>
                                    <Check $height={20}><input type="checkbox" />打印到文件(F)</Check>
                                </div>
                                <PaperPreview />
                            </PrinterRow>
                        </Group>
                        <Split $cols="1fr 95px" $top={3}>
                            <Group $pad="2px 6px 3px 7px">
                                <legend>图纸尺寸(Z)</legend>
                                <Select value="A4 210 x 297 毫米" />
                            </Group>
                            <Group>
                                <legend>打印份数(B)</legend>
                                <Spinner>
                                    <TextBox aria-label="打印份数" defaultValue="1" />
                                    <div>
                                        <button type="button" aria-label="增加"><svg width="5" height="3"><path d="M0 3h5L2.500 0z" fill="#4a6aa5" /></svg></button>
                                        <button type="button" aria-label="减少"><svg width="5" height="3"><path d="M0 0h5L2.500 3z" fill="#4a6aa5" /></svg></button>
                                    </div>
                                </Spinner>
                            </Group>
                        </Split>
                        <Split $cols="191px 1fr" $top={3}>
                            <Column>
                                <Group $pad="0 7px 6px">
                                    <legend>打印区域</legend>
                                    <Stack $gap={2}>
                                        <span>打印范围(W):</span>
                                        <FieldRow $cols="74px 63px" $gap={26}>
                                            <Anchor>
                                                <Select $open value={range} label="打印范围(W)" />
                                                <OptionList role="listbox" aria-label="打印范围">
                                                    {['布局', '窗口', '范围', '显示'].map(o => (
                                                        <li key={o} role="option" aria-selected={o === range} onClick={() => setRange(o)}>{o}</li>
                                                    ))}
                                                </OptionList>
                                            </Anchor>
                                            <PushButton type="button">窗口(O)&lt;</PushButton>
                                        </FieldRow>
                                    </Stack>
                                </Group>
                                <Group $pad="2px 7px 8px" $grow>
                                    <legend>打印偏移(原点设置在可打印区域)</legend>
                                    <Stack $gap={5}>
                                        <FieldRow $cols="12px 52px 36px 1fr">
                                            <Mono as="label" htmlFor="offX">X:</Mono><TextBox id="offX" /><span>毫米</span>
                                            <Check><input type="checkbox" />居中打印(C)</Check>
                                        </FieldRow>
                                        <FieldRow $cols="12px 52px 1fr">
                                            <Mono as="label" htmlFor="offY">Y:</Mono><TextBox id="offY" defaultValue="-3.35" /><span>毫米</span>
                                        </FieldRow>
                                    </Stack>
                                </Group>
                            </Column>
                            <Group $pad="1px 9px 7px 5px">
                                <legend>打印比例</legend>
                                <Stack $gap={3}>
                                    <Check><input type="checkbox" />布满图纸(I)</Check>
                                    <FieldRow $cols="33px 1fr">
                                        <span>比例(S):</span><Select $mono value="1:1" />
                                    </FieldRow>
                                    <FieldRow $cols="34px 43px 52px 1fr" $gap={3}>
                                        <span /><TextBox aria-label="打印单位" defaultValue="1" /><Select value="毫米" /><span>=</span>
                                    </FieldRow>
                                    <FieldRow $cols="34px 43px 1fr" $gap={3}>
                                        <span /><TextBox id="units" defaultValue="1" /><label htmlFor="units">单位(N)</label>
                                    </FieldRow>
                                    <FieldRow $cols="33px 1fr">
                                        <span /><Check><input type="checkbox" />缩放线宽(L)</Check>
                                    </FieldRow>
                                </Stack>
                            </Group>
                        </Split>
                    </Column>
                    <Column>
                        <Group $wide $pad="7px 7px 5px 11px">
                            <legend>打印样式表(画笔指定)(G)</legend>
                            <FieldRow $cols="1fr 18px" $gap={1}>
                                <Select $mono value="monochrome.ctb" />
                                <IconButton type="button" aria-label="编辑">
                                    <svg width="11" height="11"><path d="M1 1h3v3H1zM7 1h3v3H7zM3 2h5v1H3z" fill="#c33" /><path d="M1 5.500h9M2 7.500h7M2 9.500h7" stroke="#355" /></svg>
                                </IconButton>
                            </FieldRow>
                        </Group>
                        <Group $wide $pad="0 5px 3px 11px">
                            <legend>着色视口选项</legend>
                            <Stack $gap={3}>
                                <FieldRow $cols="48px 1fr"><Muted>着色打印(D)</Muted><Select $disabled value="按显示" /></FieldRow>
                                <FieldRow $cols="48px 1fr"><span>质量(Q)</span><Select value="常规" /></FieldRow>
                                <FieldRow $cols="48px 1fr"><Muted as="label" htmlFor="dpi">DPI</Muted><TextBox id="dpi" disabled defaultValue="100" /></FieldRow>
                            </Stack>
                        </Group>
                        <Group $wide $pad="0 5px 0 11px">
                            <legend>打印选项</legend>
                            {plotOptions.map(([label, on]) => (
                                <Check key={label}><input type="checkbox" defaultChecked={on} />{label}</Check>
                            ))}
                        </Group>
                        <Group $wide $grow $pad="0 6px 0 11px">
                            <legend>图形方向</legend>
                            <FieldRow $cols="1fr 20px">
                                <div>
                                    <Check $height={14}><input type="radio" name="orient" />纵向</Check>
                                    <Check $height={14}><input type="radio" name="orient" defaultChecked />横向</Check>
                                    <Check $height={14}><input type="checkbox" />上下颠倒打印(-)</Check>
                                </div>
                                <svg width="19" height="24" viewBox="0 0 19 24" aria-hidden="true">
                                    <path d="M.5.5h13l5 5v18H.5z" fill="#cfe6f5" stroke="#5a8fb8" />
                                    <path d="M13.500.5v5h5z" fill="#6fa3cb" />
                                    <path d="M5 8l9 4-9 4M8 9v6" fill="none" stroke="#18222e" strokeWidth="1.500" />
                                </svg>
                            </FieldRow>
                        </Group>
                    </Column>
                </Columns>
                <DialogButtons>
                    <PushButton type="button" $width={58}>预览(P)...</PushButton>
                    <PushButton type="button" $width={79}>应用到布局(U)</PushButton>
                    <PushButton type="submit" $width={54} $primary>确定</PushButton>
                    <PushButton type="button" $width={54}>取消</PushButton>
                    <PushButton type="button" $width={54}>帮助(H)</PushButton>
                    <CollapseButton type="button" aria-label="更少选项">
                        <svg width="7" height="8" fill="none" stroke="#1d2b45" strokeWidth="2"><path d="M5 1L2 4l3 3" /></svg>
                    </CollapseButton>
                </DialogButtons>
            </DialogBody>
        </Dialog>
    );
};

/* ---------- overlays ---------- */

const PointerArrow = styled.svg`
position: absolute;
left: 110px;
top: 375px;
filter: drop-shadow(2px 2px 1px rgba(0, 0, 0, .45));
pointer-events: none;
`;

const Watermark = styled.div`
position: absolute;
left: 768px;
bottom: 20px;
color: rgba(255, 255, 255, .75);
font-family: "Liberation Sans", sans-serif;
pointer-events: none;
strong { display: block; font-size: 40px; line-height: 34px; }
span { display: block; font-size: 26px; line-height: 28px; font-family: "Open Sans", sans-serif; }
`;

const Paw = styled.svg`
position: absolute;
right: 120px;
bottom: 82px;
`;

const Brand = styled.div`
position: absolute;
right: 0;
bottom: 0;
display: flex;
align-items: center;
gap: 9px;
width: 200px;
height: 95px;
padding-left: 12px;
background: #212d52;
color: #cfcfd0;
strong { display: block; font: 500 28px/34px Inter, "Noto Sans CJK SC", sans-serif; white-space: nowrap; }
span { display: block; font: 300 23px/24px Inter, sans-serif; }
`;

const Deer = () => (
    <svg width="44" height="60" viewBox="0 0 44 60" aria-hidden="true">
        <path d="M3 9l8 3c2-2 5-2 7 0l-1 2 1 3-5 2-1 5c3 8 8 7 15 8 8 0 11 4 10 9-1 3 1 6 1 18h-4l-1-2c1-6-1-10-4-14-4 4-10 2-14 2 0 6-2 9-2 14h-5c1-6 3-10 0-17C4 37 0 32 2 26c2-5 5-8 5-12z" fill="#cfcfd0" />
        <path d="M12 12c-2-3-2-5-1-9M12 10c3-2 3-5 3-9M14 12c3 0 6-1 7-7M16 10c6 3 14 4 19 0 4-3 4-6 8-7M21 12c7 2 13 1 18-3M27 11c1-3 0-5 1-8" fill="none" stroke="#cfcfd0" strokeWidth="1.400" />
    </svg>
);

const App = () => {
    return (
        <Window>
            <GlobalStyle />
            <AppHeader />
            <AppRibbon />
            <DocTabs>
                <DocTab type="button" $width={89}>开始</DocTab>
                <DocTab type="button" $active $width={150}>Data Extraction and...ltileaders</DocTab>
            </DocTabs>
            <Canvas>
                <Drawing />
                <ViewTools>
                    <svg width="42" height="12" viewBox="0 0 42 12" fill="none" stroke="#f0f0f0" strokeWidth="2" aria-hidden="true">
                        <path d="M1 9h8" /><path d="M16 5h6v5h-6zM18 3h6v5" strokeWidth="1.500" /><path d="M31 3l6 6M37 3l-6 6" />
                    </svg>
                    <NavBar>
                        <svg width="24" height="98" viewBox="0 0 24 98" fill="none" stroke="#7a7a7a" aria-hidden="true">
                            <circle cx="19" cy="4" r="2" /><path d="M2 8h20M2 34h20" stroke="#8d8d8d" />
                            <circle cx="11" cy="22" r="7" /><circle cx="11" cy="22" r="3" />
                            <text x="13" y="32" fontSize="6" fill="#5f8484" stroke="none">2D</text>
                            <path d="M8 54c-3-4-6-7-5-8 2-1 4 3 5 2l-2-7c1-2 3 0 4 5l1-7c1-2 3-1 2 7l3-5c2-1 2 1 1 6l2-2c2 0 0 5-3 9z" />
                            <path d="M3 59l10 10M3 70l11-11M3 62v-3h3M11 59h3v3M3 67v3h3" strokeWidth="1.500" />
                            <circle cx="15" cy="69" r="4" /><path d="M18 72l3 3" strokeWidth="2" />
                            <path d="M9 80h6l-3 3z" fill="#777" stroke="none" /><circle cx="19" cy="92" r="2" />
                        </svg>
                    </NavBar>
                </ViewTools>
                <History>
                    <li>按 Esc 或 Enter 键退出，或单击右键显示快捷菜单。</li>
                    <li>按 Esc 或 Enter 键退出，或单击右键显示快捷菜单。</li>
                    <li>指定打印窗口</li>
                </History>
            </Canvas>
            <CommandStrip>
                <CommandLine>
                    <CommandTools>
                        <svg width="4" height="14" stroke="#999"><path d="M1 0v14M3 0v14" strokeDasharray="1 1" /></svg>
                        <svg width="8" height="8"><path d="M1 1l6 6M7 1L1 7" stroke="#fff" strokeWidth="2" /></svg>
                        <Icon name="wrench" />
                    </CommandTools>
                    <Icon name="print" size={13} /><Caret $color="#9aa" />
                    <b>PLOT</b><Prompt>指定第一个角点: 指定对角点:</Prompt>
                    <ExpandCaret $color="#222" />
                </CommandLine>
            </CommandStrip>
            <BottomBar>
                <LayoutTabs>
                    <LayoutTab type="button">模型</LayoutTab>
                    <LayoutTab type="button" $active>Layout1</LayoutTab>
                    <LayoutTab type="button">+</LayoutTab>
                </LayoutTabs>
                <StatusBar>
                    <span>图纸</span>
                    <Icon name="ortho" /><Icon name="polar" /><Caret /><Icon name="iso" /><Caret />
                    <Icon name="osnapAngle" /><Icon name="osnap" /><Caret /><Icon name="lineWeight" /><Icon name="select" />
                </StatusBar>
            </BottomBar>
            <Taskbar><span /><span /><span /><span /><span /></Taskbar>
            <PlotDialog />
            <PointerArrow width="136" height="84" viewBox="110 375 136 84">
                <path d="M118 452L222 392" stroke="#f30d0d" strokeWidth="2" />
                <path d="M238 383l-20 3 4 6 4 7z" fill="#f30d0d" />
            </PointerArrow>
            <Watermark><strong>Bai</strong><span>jingyan</span></Watermark>
            <Paw width="50" height="30" viewBox="0 0 50 30"><ellipse cx="18" cy="13" rx="6" ry="7" fill="#ddd" /><ellipse cx="34" cy="14" rx="6" ry="7" fill="#ddd" /></Paw>
            <Brand>
                <Deer />
                <div><strong>3D溜溜网</strong><span>3D66.COM</span></div>
            </Brand>
        </Window>
    );
}

export default App;
